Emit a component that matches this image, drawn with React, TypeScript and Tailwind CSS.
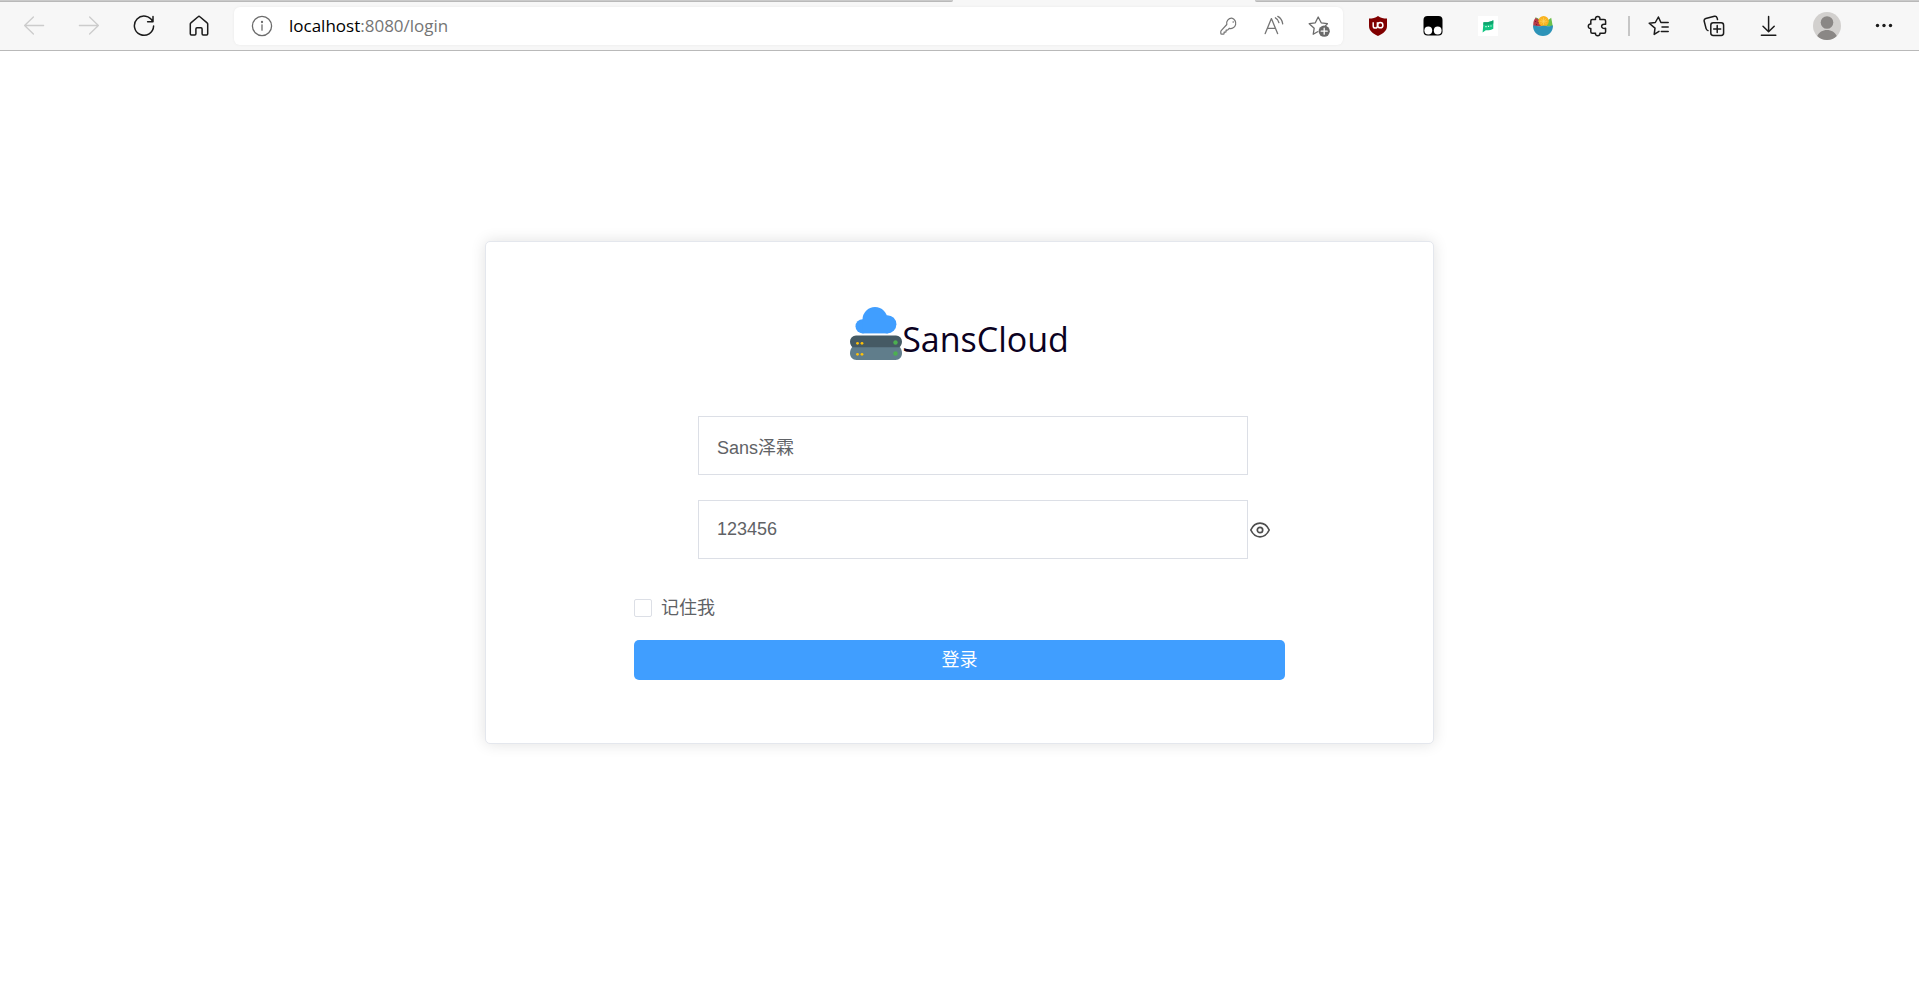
import { useState, type ReactNode } from "react";

function ToolButton({ label, className = "w-[55px]", children }: { label: string; className?: string; children: ReactNode }) {
  return (
    <button type="button" aria-label={label} className={`flex h-10 shrink-0 items-center justify-center ${className}`}>
      {children}
    </button>
  );
}

function LineIcon({ children, className = "text-[#1b1b1b]", width = 1.4 }: { children: ReactNode; className?: string; width?: number }) {
  return (
    <svg
      viewBox="0 0 22 22"
      className={`size-[22px] ${className}`}
      fill="none"
      stroke="currentColor"
      strokeWidth={width}
      strokeLinecap="round"
      strokeLinejoin="round"
      aria-hidden="true"
    >
      {children}
    </svg>
  );
}

function TabStrip() {
  return (
    <div className="flex h-[2px] bg-[#f7f7f7]">
      <div className="w-[953px] rounded-br-sm border-b border-[#b9b9b9] bg-[#cacaca]" />
      <div className="w-[302px]" />
      <div className="flex-1 rounded-bl-sm border-b border-[#b9b9b9] bg-[#cacaca]" />
    </div>
  );
}

function AddressBar() {
  return (
    <div className="ml-2 flex h-[38px] min-w-0 flex-1 items-center rounded-md bg-white pl-[17px] pr-[2px] shadow-[0_0_3px_rgba(0,0,0,0.06)]">
      <button type="button" aria-label="Site information">
        <LineIcon className="text-[#6b6b6b]" width={1.3}>
          <circle cx="11" cy="11" r="9.6" />
          <path d="M11 9.8v5.4" />
          <circle cx="11" cy="7" r="0.5" fill="currentColor" />
        </LineIcon>
      </button>
      <div
        role="textbox"
        aria-label="Address"
        contentEditable
        suppressContentEditableWarning
        spellCheck={false}
        className="ml-4 flex-1 whitespace-nowrap text-[17px] leading-6 text-[#757575] outline-none"
      >
        <span className="text-black">localhost</span>:8080/login
      </div>
      <ToolButton label="Passwords" className="w-[45px]">
        <LineIcon className="text-[#757575]" width={1.2}>
          <path d="M13.8 3.2a5 5 0 0 0-5 6.3L3.2 15.6a1.6 1.6 0 0 0-.4 1.1v1.6c0 .5.3.9.9.9h1.5c.5 0 .9-.4.9-.9v-1.2h1.2c.5 0 .8-.4.8-.9v-1.1h1.1c.3 0 .5-.1.7-.3l1.3-1.4a5.2 5.2 0 1 0 2.6-10.2Z" />
          <circle cx="15.2" cy="7" r="0.8" fill="currentColor" stroke="none" />
        </LineIcon>
      </ToolButton>
      <ToolButton label="Read aloud" className="w-[45px]">
        <LineIcon className="text-[#757575]" width={1.3}>
          <path d="M2.2 18.6 8.4 3.6l6.2 15M4.4 13.4h8" />
          <path d="M12.4 2.8c1.9.9 3.1 2.5 3.5 4.8M14.8 1.4c2.7 1.4 4.4 3.8 4.9 7.4" />
        </LineIcon>
      </ToolButton>
      <ToolButton label="Add to favorites" className="w-[45px]">
        <LineIcon className="text-[#6b6b6b]" width={1.3}>
          <path d="M9.6 16.8 5.2 19.3l1-6.1L1.2 8.7l6.1-.9L10.2 2l3 5.8 6.2.9-1.8 1.9" />
          <circle cx="16.2" cy="16.2" r="5.6" fill="currentColor" stroke="none" />
          <path d="M16.2 13.2v6M13.2 16.2h6" stroke="#fff" />
        </LineIcon>
      </ToolButton>
    </div>
  );
}

function Toolbar() {
  return (
    <header className="border-b border-[#b9b9b9] bg-[#f7f7f7] font-['Open_Sans','Noto_Sans',sans-serif]">
      <TabStrip />
      <div className="flex h-12 items-center pl-[6px] pr-2">
        <ToolButton label="Back">
          <LineIcon className="text-[#cccccc]" width={1.3}>
            <path d="M20.6 10.5H1.6M10.4 2 1.6 10.5l8.8 8.5" />
          </LineIcon>
        </ToolButton>
        <ToolButton label="Forward">
          <LineIcon className="text-[#cccccc]" width={1.3}>
            <path d="M1.4 10.5h19M11.6 2l8.8 8.5-8.8 8.5" />
          </LineIcon>
        </ToolButton>
        <ToolButton label="Refresh">
          <LineIcon width={1.5}>
            <path d="M19.7 6.6A9.6 9.6 0 1 0 20.6 11M20 1.6v5.2h-5.4" />
          </LineIcon>
        </ToolButton>
        <ToolButton label="Home">
          <LineIcon width={1.5}>
            <path d="M2.3 9.1c0-.5.2-.9.6-1.2l7.2-6.1c.5-.5 1.3-.5 1.8 0l7.2 6.1c.4.3.6.7.6 1.2v9.7c0 .6-.5 1.1-1.1 1.1h-3.4c-.6 0-1.1-.5-1.1-1.1v-4.9c0-.6-.5-1.1-1.1-1.1H9c-.6 0-1.1.5-1.1 1.1v4.9c0 .6-.5 1.1-1.1 1.1H3.4c-.6 0-1.1-.5-1.1-1.1Z" />
          </LineIcon>
        </ToolButton>

        <AddressBar />

        <div className="ml-[7px] flex">
          <ToolButton label="uBlock Origin">
            <svg viewBox="0 0 20 20" className="size-5" aria-hidden="true">
              <path d="M10 0c2.6 1.8 5.4 2.6 9 2.6V10c0 4.6-3.6 7.6-9 10-5.4-2.4-9-5.4-9-10V2.6C4.6 2.6 7.4 1.8 10 0Z" fill="#800000" />
              <path d="M5.2 6.2v3.8a2.1 2.1 0 0 0 4.2 0V6.2" fill="none" stroke="#fff" strokeWidth="1.5" />
              <circle cx="12.3" cy="9.2" r="2.6" fill="none" stroke="#fff" strokeWidth="1.5" />
            </svg>
          </ToolButton>
          <ToolButton label="Tampermonkey">
            <svg viewBox="0 0 20 20" className="size-5" aria-hidden="true">
              <rect x="0.5" y="0" width="19" height="19.5" rx="4" fill="#000" />
              <circle cx="5.3" cy="14.5" r="3.9" fill="#fff" />
              <circle cx="14.7" cy="14.5" r="3.9" fill="#fff" />
            </svg>
          </ToolButton>
          <ToolButton label="Chat extension">
            <svg viewBox="0 0 20 20" className="size-5" aria-hidden="true">
              <path d="M0 0h20v20H0Z" fill="#fff" />
              <path d="M5.5 6.2c3.5.4 6.500-.2 9.800-1.900v8.500c-2.500 1.300-5 1.600-7.500 1.400L4.600 16.500Z" fill="#12c481" />
              <path d="M5.5 6.2c3.500.4 6.500-.2 9.800-1.900v3.200c-3 1.200-6.500 1.500-10 1.200Z" fill="#0fa26d" />
              <path d="M7.4 10.600h1.200M9.900 10.400h1.200M12.400 10h1.200" stroke="#e6fff5" strokeWidth="1.200" />
            </svg>
          </ToolButton>
          <ToolButton label="Fruit bowl extension">
            <svg viewBox="0 0 20 20" className="size-5" aria-hidden="true">
              <path d="M14 5 18.200 1.800l1.600 8.700H13Z" fill="#6cc04a" />
              <path d="M.4 10.500C-.1 7 .6 4 2.600 1.800 6.500 3 9 6.500 9.200 10.500Z" fill="#b93a48" />
              <path d="M2.600 1.800c3.300 1 5.500 3.300 6.300 6.500" fill="none" stroke="#67a64b" strokeWidth="0.9" />
              <path d="M2.200 5.500h.9M4.800 6.500h.9M3.200 8.600h.9" stroke="#5b1f2b" />
              <circle cx="10.600" cy="5.200" r="5.200" fill="#f9b21d" />
              <path d="M10.600 1.500v7.400M7 5.200h7.200M8.100 2.700l5 5M13.100 2.700l-5 5" stroke="#fdd663" strokeWidth="0.7" />
              <path d="M0 9.500c3 0 4.500.8 6.500.8s2.500-.6 4.500-.6 2.500.6 4.500.6S18 9.500 20 9.500C20 15.500 16 20 10 20S0 15.500 0 9.500Z" fill="#2d93b8" />
            </svg>
          </ToolButton>
          <ToolButton label="Extensions">
            <LineIcon width={1.5}>
              <path d="M5.3 4.500h3.200c-.3-1.900.6-3.100 2.200-3.100s2.500 1.200 2.200 3.100h4.200c.9 0 1.500.6 1.500 1.500v3.300c-2.200-.5-4 .3-4 2s1.800 2.500 4 2v3.500c0 .9-.6 1.500-1.500 1.500h-4.200c.3 1.500-.6 2.400-2.200 2.400s-2.500-.9-2.200-2.400H5.300c-.9 0-1.500-.6-1.500-1.500v-3.300c-1.600.1-2.500-.7-2.500-2.200s.9-2.300 2.500-2.200V6c0-.9.6-1.500 1.500-1.500Z" />
            </LineIcon>
          </ToolButton>
        </div>
        <div className="ml-[3px] mr-px h-5 w-[2px] bg-[#c6c6c6]" />
        <div className="flex">
          <ToolButton label="Favorites">
            <LineIcon width={1.5}>
              <path d="m11 16.400-4.800 3 .8-6.300L1.200 8.200l6.100-.7L10.400 2l2.500 5.500h7.300M14 12h6.200M13.300 16.400h6.900" />
            </LineIcon>
          </ToolButton>
          <ToolButton label="Collections">
            <LineIcon width={1.5}>
              <rect x="7.8" y="7.8" width="12.8" height="12.6" rx="2.4" />
              <path d="M14.200 10.600v7M10.700 14.100h7M5 15.600c-1-.3-1.600-1-1.900-2L1.200 6.300c-.3-1.300.3-2.400 1.600-2.800l8.600-2.200c1.300-.3 2.300.4 2.700 1.600l.4 1.600" />
            </LineIcon>
          </ToolButton>
          <ToolButton label="Downloads">
            <LineIcon width={1.5}>
              <path d="M10.600 1.400v15M5 11.200l5.600 5.600 5.600-5.600M3.400 20.300h14.400" />
            </LineIcon>
          </ToolButton>
        </div>
        <ToolButton label="Profile" className="ml-[3px] w-[55px]">
          <svg viewBox="0 0 28 28" className="size-7" aria-hidden="true">
            <circle cx="14" cy="14" r="14" fill="#d2d0ce" />
            <circle cx="14" cy="10.5" r="6.3" fill="#8a8785" />
            <path d="M4.200 24c1.800-3.800 5.400-6 9.800-6s8 2.200 9.800 6a14 14 0 0 1-19.600 0Z" fill="#8a8785" />
          </svg>
        </ToolButton>
        <ToolButton label="Settings and more" className="ml-[2px] w-[55px]">
          <svg viewBox="0 0 22 22" className="size-[22px]" fill="#1b1b1b" aria-hidden="true">
            <circle cx="4.5" cy="10.5" r="1.7" />
            <circle cx="11" cy="10.5" r="1.7" />
            <circle cx="17.5" cy="10.5" r="1.7" />
          </svg>
        </ToolButton>
      </div>
    </header>
  );
}

function CloudServerLogo() {
  return (
    <svg viewBox="0 0 52 53" className="h-[53px] w-[52px]" aria-hidden="true">
      <g fill="#409eff">
        <circle cx="12.6" cy="19.3" r="7.1" />
        <circle cx="25" cy="12.5" r="12.5" />
        <circle cx="37.3" cy="17.3" r="9.1" />
        <path d="M12.600 14h25v12.400h-25Z" />
      </g>
      <path d="M2.600 39.500h46.800c1.600 1.800 2.600 3.900 2.600 6.500 0 4-2.500 7-6.500 7h-39C2.500 53 0 50 0 46c0-2.600 1-4.700 2.600-6.500Z" fill="#607d8b" />
      <path d="M6 28.500h40a6 6 0 0 1 6 6c0 2.600-1 4.500-2.600 5.700H2.600C1 39 0 37.100 0 34.500a6 6 0 0 1 6-6Z" fill="#455a64" />
      <g fill="#ffc107">
        <circle cx="7.5" cy="36.3" r="1.4" />
        <circle cx="12" cy="36.3" r="1.4" />
        <circle cx="7.5" cy="47.3" r="1.4" />
        <circle cx="12" cy="47.3" r="1.4" />
      </g>
      <circle cx="45.5" cy="35.5" r="2.2" fill="#4caf50" />
      <circle cx="45.5" cy="46.5" r="2.2" fill="#4caf50" />
    </svg>
  );
}

const fieldClass =
  "h-[59px] min-w-0 flex-1 border border-[#dcdfe6] bg-white px-[18px] text-[18px] text-[#606266] outline-none focus:border-[#409eff]";

function LoginCard() {
  const [visible, setVisible] = useState(true);
  const [name, setName] = useState("Sans泽霖");
  const [password, setPassword] = useState("123456");

  return (
    <main className="mx-auto mt-[190px] w-full max-w-[949px] rounded-[5px] border border-[#e4e7ed] bg-white px-6 pb-[63px] pt-[65px] shadow-[0_0_15px_rgba(0,0,0,0.12)]">
      <form className="mx-auto flex w-full max-w-[651px] flex-col" onSubmit={(event) => event.preventDefault()}>
        <h1 className="flex items-start justify-center text-[34px] text-[#0b0121] font-['Open_Sans','Noto_Sans',sans-serif]">
          <CloudServerLogo />
          <span className="pt-2 leading-[48px]">SansCloud</span>
        </h1>

        <div className="mt-[53px] flex pl-16 pr-[37px]">
          <input aria-label="用户名" className={fieldClass} value={name} onChange={(event) => setName(event.target.value)} />
        </div>

        <div className="mt-[25px] flex items-center gap-[2px] pl-16 pr-[15px]">
          <input
            aria-label="密码"
            type={visible ? "text" : "password"}
            className={fieldClass}
            value={password}
            onChange={(event) => setPassword(event.target.value)}
          />
          <button type="button" aria-label="显示密码" onClick={() => setVisible(!visible)}>
            <svg viewBox="0 0 20 20" className="size-5" fill="none" stroke="#4d4d4d" strokeWidth="1.7" aria-hidden="true">
              <path d="M.8 10C3 5.400 6.200 3.200 10 3.200S17 5.400 19.200 10C17 14.600 13.800 16.800 10 16.800S3 14.600.8 10Z" />
              <circle cx="10" cy="10" r="2.7" />
            </svg>
          </button>
        </div>

        <label className="mt-[37px] flex items-center gap-[9px] self-start text-[18px] leading-6 text-[#606266]">
          <input
            type="checkbox"
            className="size-[18px] appearance-none rounded-[2px] border border-[#dcdfe6] bg-white checked:border-[#409eff] checked:bg-[#409eff]"
          />
          记住我
        </label>

        <button type="submit" className="mt-5 h-10 rounded-[5px] bg-[#409eff] text-[18px] leading-6 text-white">
          登录
        </button>
      </form>
    </main>
  );
}

export default function App() {
  return (
    <div className="min-h-screen bg-white font-['Liberation_Sans','Noto_Sans_CJK_SC',sans-serif]">
      <Toolbar />
      <LoginCard />
    </div>
  );
}
